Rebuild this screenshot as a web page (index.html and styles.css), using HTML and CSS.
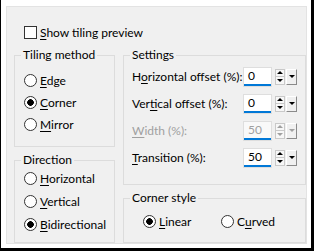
FILE: index.html
```html
<!DOCTYPE html>
<html lang="en">
<head>
    <meta charset="UTF-8">
    <meta name="viewport" content="width=device-width, initial-scale=1.0">
    <title>Tiling</title>
    <link rel="stylesheet" href="styles.css">
</head>
<body>
    <div class="frame">
        <div class="dialog">
            <!-- Preview toggle -->
            <div class="check-row">
                <span class="checkbox"></span>
                <span><u>S</u>how tiling preview</span>
            </div>

            <div class="columns">
                <div class="col col-left">
                    <fieldset class="group group-tiling">
                        <legend>Tiling method</legend>
                        <div class="radio-row"><span class="radio"></span><span><u>E</u>dge</span></div>
                        <div class="radio-row"><span class="radio checked"></span><span><u>C</u>orner</span></div>
                        <div class="radio-row"><span class="radio"></span><span><u>M</u>irror</span></div>
                    </fieldset>

                    <fieldset class="group group-direction">
                        <legend>Direction</legend>
                        <div class="radio-row"><span class="radio"></span><span><u>H</u>orizontal</span></div>
                        <div class="radio-row"><span class="radio"></span><span><u>V</u>ertical</span></div>
                        <div class="radio-row"><span class="radio checked"></span><span><u>B</u>idirectional</span></div>
                    </fieldset>
                </div>

                <div class="col col-right">
                    <fieldset class="group group-settings">
                        <legend>Settings</legend>
                        <div class="field">
                            <span class="field-label">H<u>o</u>rizontal offset (%):</span>
                            <span class="num"><span class="num-val">0</span></span>
                            <span class="spin"><span class="spin-up"></span><span class="spin-down"></span></span>
                            <span class="drop"></span>
                        </div>
                        <div class="field">
                            <span class="field-label">Ver<u>t</u>ical offset (%):</span>
                            <span class="num"><span class="num-val">0</span></span>
                            <span class="spin"><span class="spin-up"></span><span class="spin-down"></span></span>
                            <span class="drop"></span>
                        </div>
                        <div class="field disabled">
                            <span class="field-label"><u>W</u>idth (%):</span>
                            <span class="num"><span class="num-val">50</span></span>
                            <span class="spin"><span class="spin-up"></span><span class="spin-down"></span></span>
                            <span class="drop"></span>
                        </div>
                        <div class="field">
                            <span class="field-label"><u>T</u>ransition (%):</span>
                            <span class="num"><span class="num-val">50</span></span>
                            <span class="spin"><span class="spin-up"></span><span class="spin-down"></span></span>
                            <span class="drop"></span>
                        </div>
                    </fieldset>

                    <fieldset class="group group-corner">
                        <legend>Corner style</legend>
                        <div class="corner-row">
                            <div class="radio-row"><span class="radio checked"></span><span><u>L</u>inear</span></div>
                            <div class="radio-row"><span class="radio"></span><span>C<u>u</u>rved</span></div>
                        </div>
                    </fieldset>
                </div>
            </div>
        </div>
    </div>
</body>
</html>
```

FILE: styles.css
```css
body {
    margin: 0;
    font-family: 'Lato', 'Liberation Sans', sans-serif;
    font-size: 12px;
    color: #000;
    background: #fff;
}

u {
    text-decoration-thickness: 1px;
    text-underline-offset: 2px;
}

.frame {
    width: 314px;
    height: 251px;
    box-sizing: border-box;
    border-left: 1px solid #000;
    border-right: 3px solid #000;
    border-bottom: 3px solid #000;
    padding: 6px 4px 4px 5px;
    background: #fff;
}

.dialog {
    height: 100%;
    box-sizing: border-box;
    background: #f0f0f0;
    border: 1px solid #e3e3e3;
    padding: 0 0 0 7px;
}

/* checkbox line */
.check-row {
    display: flex;
    align-items: center;
    gap: 3px;
    height: 13px;
    margin: 19px 0 0 10px;
}

.checkbox {
    width: 13px;
    height: 13px;
    box-sizing: border-box;
    border: 1px solid #333;
    background: #fff;
}

.columns {
    display: flex;
    gap: 8px;
    margin-top: 9px;
}

.col {
    display: flex;
    flex-direction: column;
    gap: 6px;
}

.col-left {
    width: 101px;
}

.col-right {
    width: 183px;
}

/* group boxes */
.group {
    margin: 0;
    min-width: 0;
    box-sizing: border-box;
    border: 1px solid #dcdcdc;
    padding: 0 6px;
}

.group legend {
    padding: 0 2px;
    line-height: 14px;
}

.group-tiling {
    height: 99px;
    padding-top: 7px;
}

.group-direction {
    height: 90px;
}

.group-direction .radio-row {
    height: 23px;
}

.group-settings {
    height: 137px;
    padding-top: 1px;
}

.group-corner {
    height: 52px;
    padding-top: 5px;
}

/* radios */
.radio-row {
    display: flex;
    align-items: center;
    gap: 3px;
    height: 22px;
    margin-left: 3px;
}

.radio {
    width: 13px;
    height: 13px;
    box-sizing: border-box;
    border: 1px solid #333;
    border-radius: 50%;
    background: #fff;
}

.radio.checked {
    background: radial-gradient(circle, #000 3px, #fff 3.6px);
}

.corner-row {
    display: flex;
    margin-left: 13px;
}

.corner-row .radio-row {
    width: 82px;
    margin-left: 0;
}

/* numeric fields */
.field {
    display: flex;
    align-items: center;
    height: 27px;
    margin-left: 2px;
}

.field-label {
    width: 111px;
}

.num {
    width: 29px;
    height: 20px;
    box-sizing: border-box;
    border: 1px solid #dedede;
    background: #fff;
}

.num-val {
    display: block;
    height: 16px;
    line-height: 16px;
    padding-left: 4px;
    border-bottom: 2px solid #0078d7;
}

.spin {
    display: flex;
    flex-direction: column;
    width: 10px;
    height: 16px;
    margin-left: 3px;
    border: 1px solid #c9c9c9;
    box-sizing: border-box;
    background: #f7f7f7;
}

.spin-up,
.spin-down {
    flex: 1;
    display: flex;
    align-items: center;
    justify-content: center;
}

.spin-down {
    border-top: 1px solid #c9c9c9;
}

.spin-up::after {
    content: '';
    border-left: 3px solid transparent;
    border-right: 3px solid transparent;
    border-bottom: 3px solid #000;
}

.spin-down::after {
    content: '';
    border-left: 3px solid transparent;
    border-right: 3px solid transparent;
    border-top: 3px solid #000;
}

.drop {
    display: flex;
    align-items: center;
    justify-content: center;
    width: 11px;
    height: 16px;
    margin-left: 1px;
    box-sizing: border-box;
    background: #f0f0f0;
    border-top: 1px solid #fff;
    border-left: 1px solid #fff;
    border-right: 1px solid #8a8a8a;
    border-bottom: 1px solid #8a8a8a;
}

.drop::after {
    content: '';
    border-left: 3px solid transparent;
    border-right: 3px solid transparent;
    border-top: 3px solid #000;
}

.disabled .field-label,
.disabled .num-val {
    color: #a0a0a0;
}

.disabled .num {
    background: #f9f9f9;
}

.disabled .spin-up::after {
    border-bottom-color: #a0a0a0;
}

.disabled .spin-down::after,
.disabled .drop::after {
    border-top-color: #a0a0a0;
}
```
